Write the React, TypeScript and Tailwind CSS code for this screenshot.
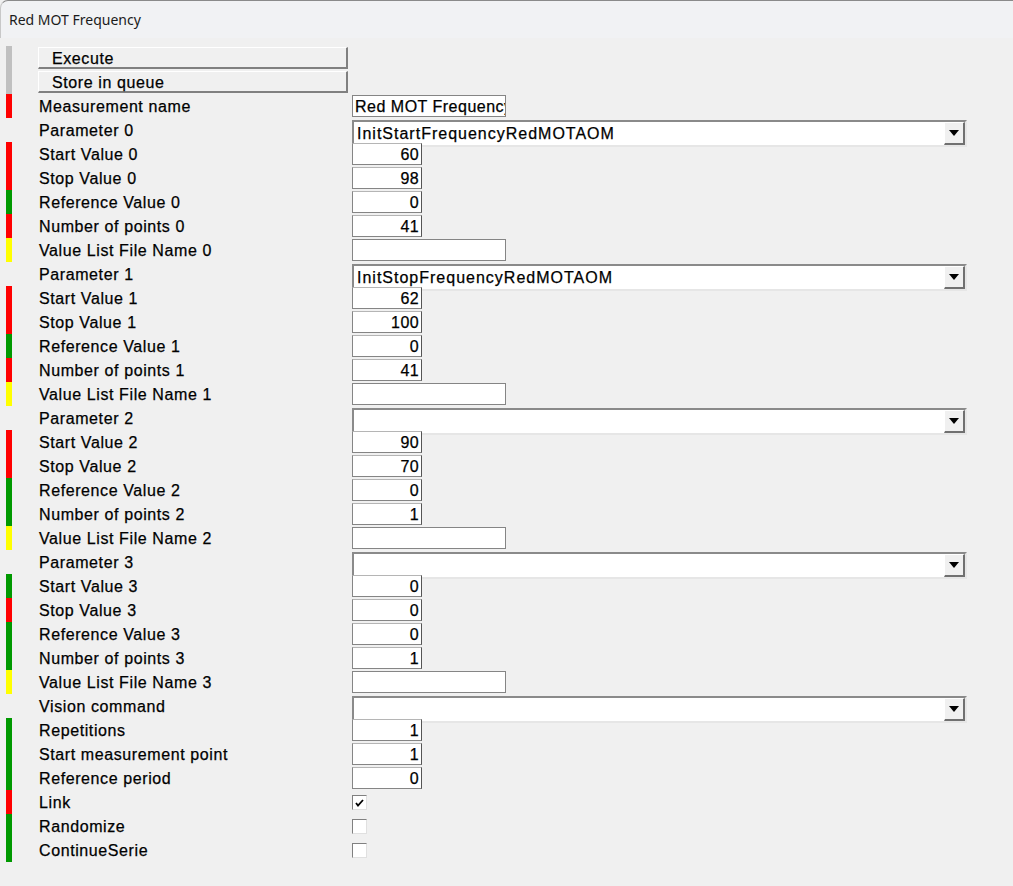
import React from "react";

type Kind = "button" | "text" | "num" | "combo" | "check" | "file";
type Row = { label: string; bar: string; kind: Kind; value?: string; checked?: boolean };

const R = "#ff0000";
const G = "#009900";
const Y = "#ffff00";
const S = "#c0c0c0";
const N = "transparent";

const rows: Row[] = [
  { label: "Execute", bar: S, kind: "button" },
  { label: "Store in queue", bar: S, kind: "button" },
  { label: "Measurement name", bar: R, kind: "text", value: "Red MOT Frequency" },
  { label: "Parameter 0", bar: N, kind: "combo", value: "InitStartFrequencyRedMOTAOM" },
  { label: "Start Value 0", bar: R, kind: "num", value: "60" },
  { label: "Stop Value 0", bar: R, kind: "num", value: "98" },
  { label: "Reference Value 0", bar: G, kind: "num", value: "0" },
  { label: "Number of points 0", bar: R, kind: "num", value: "41" },
  { label: "Value List File Name 0", bar: Y, kind: "file", value: "" },
  { label: "Parameter 1", bar: N, kind: "combo", value: "InitStopFrequencyRedMOTAOM" },
  { label: "Start Value 1", bar: R, kind: "num", value: "62" },
  { label: "Stop Value 1", bar: R, kind: "num", value: "100" },
  { label: "Reference Value 1", bar: G, kind: "num", value: "0" },
  { label: "Number of points 1", bar: R, kind: "num", value: "41" },
  { label: "Value List File Name 1", bar: Y, kind: "file", value: "" },
  { label: "Parameter 2", bar: N, kind: "combo", value: "" },
  { label: "Start Value 2", bar: R, kind: "num", value: "90" },
  { label: "Stop Value 2", bar: R, kind: "num", value: "70" },
  { label: "Reference Value 2", bar: G, kind: "num", value: "0" },
  { label: "Number of points 2", bar: G, kind: "num", value: "1" },
  { label: "Value List File Name 2", bar: Y, kind: "file", value: "" },
  { label: "Parameter 3", bar: N, kind: "combo", value: "" },
  { label: "Start Value 3", bar: G, kind: "num", value: "0" },
  { label: "Stop Value 3", bar: R, kind: "num", value: "0" },
  { label: "Reference Value 3", bar: G, kind: "num", value: "0" },
  { label: "Number of points 3", bar: G, kind: "num", value: "1" },
  { label: "Value List File Name 3", bar: Y, kind: "file", value: "" },
  { label: "Vision command", bar: N, kind: "combo", value: "" },
  { label: "Repetitions", bar: G, kind: "num", value: "1" },
  { label: "Start measurement point", bar: G, kind: "num", value: "1" },
  { label: "Reference period", bar: G, kind: "num", value: "0" },
  { label: "Link", bar: R, kind: "check", checked: true },
  { label: "Randomize", bar: G, kind: "check", checked: false },
  { label: "ContinueSerie", bar: G, kind: "check", checked: false },
];

function Control({ row }: { row: Row }) {
  switch (row.kind) {
    case "text":
    case "file":
      return (
        <div className="mt-[1px] h-[22px] w-[154px] bg-white border border-[#858585] overflow-hidden whitespace-nowrap pl-[2px] text-[16px] leading-[21px] tracking-[0.5px] text-black">
          {row.value}
        </div>
      );
    case "num":
      return (
        <div className="mt-[1px] h-[22px] w-[70px] bg-white border border-[#858585] border-t-[#b5b5b5] border-r-[#555555] text-right pr-[2px] text-[16px] leading-[21px] tracking-[0.4px] text-black">
          {row.value}
        </div>
      );
    case "combo":
      return (
        <div className="mt-[2px] h-[27px] w-[615px] bg-white border-t-2 border-l-2 border-t-[#8a8a8a] border-l-[#8a8a8a] border-b-2 border-r-2 border-b-[#e6e6e6] border-r-[#e6e6e6] flex items-stretch">
          <div className="flex-1 pl-[3px] text-[16px] leading-[24px] tracking-[1px] text-black whitespace-nowrap overflow-hidden">
            {row.value}
          </div>
          <div className="w-[21px] bg-[#f0f0f0] border-t border-l border-t-white border-l-white border-b-2 border-r-2 border-b-[#707070] border-r-[#707070] flex items-center justify-center">
            <svg width="10" height="6" viewBox="0 0 10 6">
              <path d="M0 0H10L5 6Z" fill="#000" />
            </svg>
          </div>
        </div>
      );
    case "check":
      return (
        <div className="mt-[5px] h-[15px] w-[15px] bg-white border border-t-[#808080] border-l-[#808080] border-b-[#e0e0e0] border-r-[#e0e0e0] flex items-center justify-center">
          {row.checked && (
            <svg width="9" height="8" viewBox="0 0 9 8">
              <path d="M1 4L3 6.5L8 1" stroke="#000" strokeWidth="1.8" fill="none" />
            </svg>
          )}
        </div>
      );
    default:
      return null;
  }
}

export default function App() {
  return (
    <div className="w-[1013px] h-[886px] bg-[#f0f0f0] overflow-hidden font-['Liberation_Sans',Arial,sans-serif] text-black [-webkit-text-stroke:0.25px_#000]">
      <div className="h-[38px] bg-[#f1f2f4] rounded-tl-[8px] border-t border-l border-t-[#8a8a8a] border-l-[#c8c8c8] flex items-center pl-[8px] [-webkit-text-stroke:0px]">
        <span className="font-['Noto_Sans',sans-serif] text-[14px] text-[#1b1b1b]">Red MOT Frequency</span>
      </div>
      <div className="pt-[8px]">
        {rows.map((row, i) => (
          <div key={i} className="h-[24px] flex items-start">
            <div className="ml-[6px] w-[6px] h-[24px]" style={{ background: row.bar }} />
            {row.kind === "button" ? (
              <div className="ml-[26px] mt-[1px] h-[22px] w-[310px] bg-[#f0f0f0] border-t border-l border-t-white border-l-white border-b-2 border-r-2 border-b-[#808080] border-r-[#808080] pl-[13px] text-[16px] leading-[21px] tracking-[0.6px]">
                {row.label}
              </div>
            ) : (
              <>
                <div className="ml-[27px] w-[313px] text-[16px] leading-[25px] tracking-[0.6px] whitespace-nowrap">{row.label}</div>
                <Control row={row} />
              </>
            )}
          </div>
        ))}
      </div>
    </div>
  );
}
